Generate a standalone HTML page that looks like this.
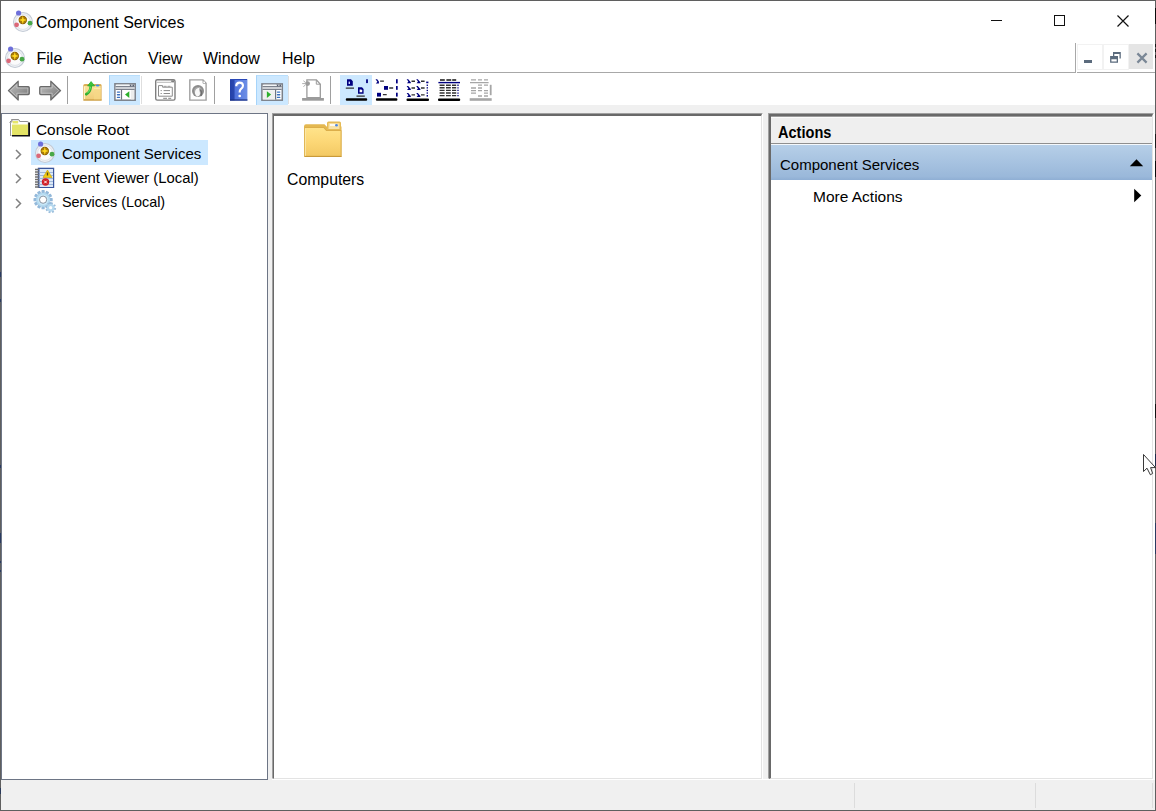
<!DOCTYPE html>
<html><head><meta charset="utf-8">
<style>
html,body{margin:0;padding:0;width:1156px;height:811px;overflow:hidden;background:#fff;}
body{position:relative;font-family:"Liberation Sans",sans-serif;color:#000;}
.a{position:absolute;}
.t{position:absolute;white-space:nowrap;line-height:1;}
</style></head><body>

<svg width="0" height="0" style="position:absolute">
<defs>
<radialGradient id="ringG" cx="0.45" cy="0.4" r="0.6"><stop offset="0" stop-color="#ffffff"/><stop offset="0.7" stop-color="#eef0f3"/><stop offset="1" stop-color="#c9ced6"/></radialGradient>
<radialGradient id="goldG" cx="0.5" cy="0.5" r="0.5"><stop offset="0" stop-color="#ffd800"/><stop offset="0.8" stop-color="#d9a400"/><stop offset="1" stop-color="#8a6000"/></radialGradient>
<symbol id="cs" viewBox="0 0 24 24">
<circle cx="12" cy="13" r="9.5" fill="#eef0f4" stroke="#c3cad5" stroke-width="1.1"/>
<circle cx="12" cy="13" r="7.4" fill="#fbfbfc" stroke="#dde1e7" stroke-width="0.9"/>
<circle cx="11.8" cy="11" r="4.2" fill="#845a00"/>
<circle cx="11.8" cy="11" r="3.5" fill="#a87a08"/>
<path d="M11.8 6.8L12.7 10.1L16 11L12.7 11.9L11.8 15.2L10.9 11.9L7.6 11L10.9 10.1Z" fill="#ffd820"/>
<circle cx="7.6" cy="4" r="2.6" fill="#6d6fda"/>
<circle cx="5.6" cy="15.8" r="2.4" fill="#dc6878"/>
<circle cx="19" cy="14.2" r="2.4" fill="#48a848"/>
</symbol>
</defs></svg>
<!-- window border -->
<div class="a" style="left:0;top:0;width:1156px;height:1px;background:#5f5f5f"></div>
<div class="a" style="left:0;top:0;width:1px;height:811px;background:#5f5f5f"></div>
<div class="a" style="left:1155px;top:0;width:1px;height:811px;background:#5f5f5f"></div>
<div class="a" style="left:0;top:810px;width:1156px;height:1px;background:#5f5f5f"></div>


<div class="a" style="left:1155px;top:8px;width:1px;height:16px;background:#0a0a0a"></div>
<div class="a" style="left:1155px;top:44px;width:1px;height:3px;background:#151515"></div>
<div class="a" style="left:1155px;top:49px;width:1px;height:3px;background:#151515"></div>
<div class="a" style="left:1155px;top:55px;width:1px;height:3px;background:#151515"></div>
<div class="a" style="left:1155px;top:134px;width:1px;height:14px;background:#1a1a1a"></div>
<div class="a" style="left:1155px;top:161px;width:1px;height:16px;background:#0a0a0a"></div>
<div class="a" style="left:1155px;top:454px;width:1px;height:12px;background:#1c2a4a"></div>
<div class="a" style="left:0;top:788px;width:1px;height:6px;background:#2a3a5a"></div>
<div class="a" style="left:0;top:272px;width:1px;height:5px;background:#2a3a60"></div>
<div class="a" style="left:0;top:299px;width:1px;height:3px;background:#2a3a60"></div>
<div class="a" style="left:0;top:465px;width:1px;height:3px;background:#2a3a60"></div>
<div class="a" style="left:0;top:533px;width:1px;height:10px;background:#2a3a60"></div>
<div class="a" style="left:0;top:561px;width:1px;height:2px;background:#2a3a60"></div>
<div class="a" style="left:0;top:570px;width:1px;height:2px;background:#2a3a60"></div>
<div class="a" style="left:1155px;top:404px;width:1px;height:14px;background:#111"></div>
<div class="a" style="left:1155px;top:523px;width:1px;height:31px;background:#2a3a60"></div>
<!-- title bar -->
<svg class="a" style="left:11px;top:9px" width="24" height="24"><use href="#cs"/></svg>
<div class="t" style="left:36px;top:15px;font-size:16px">Component Services</div>
<!-- title controls -->
<div class="a" style="left:991px;top:20px;width:11px;height:1px;background:#111"></div>
<div class="a" style="left:1054px;top:15px;width:9px;height:9px;border:1px solid #111"></div>
<svg class="a" style="left:1116px;top:14px" width="14" height="14" viewBox="0 0 14 14"><path d="M1.5 1.5L12.5 12.5M12.5 1.5L1.5 12.5" stroke="#111" stroke-width="1.2"/></svg>

<!-- menu bar -->
<svg class="a" style="left:3px;top:45px" width="24" height="24"><use href="#cs"/></svg>
<div class="t" style="left:36.5px;top:51px;font-size:16px">File</div>
<div class="t" style="left:83px;top:51px;font-size:16px">Action</div>
<div class="t" style="left:148px;top:51px;font-size:16px">View</div>
<div class="t" style="left:203px;top:51px;font-size:16px">Window</div>
<div class="t" style="left:282px;top:51px;font-size:16px">Help</div>
<div class="a" style="left:1px;top:72px;width:1075px;height:1px;background:#a8a8a8"></div>
<div class="a" style="left:1075px;top:43px;width:1px;height:30px;background:#a8a8a8"></div>
<div class="a" style="left:1077px;top:72px;width:78px;height:1px;background:#a8a8a8"></div>


<!-- MDI buttons -->
<div class="a" style="left:1077px;top:44px;width:24px;height:24px;border:1px solid #f2f2f2;background:#fff"></div>
<div class="a" style="left:1103px;top:44px;width:24px;height:24px;border:1px solid #f2f2f2;background:#fff"></div>
<div class="a" style="left:1129px;top:44px;width:24px;height:25px;background:#e5e5e5"></div>
<div class="a" style="left:1084px;top:60px;width:8px;height:3px;background:#5b6b7d"></div>
<svg class="a" style="left:1109px;top:51px" width="13" height="13" viewBox="1109 51 13 13">
<path d="M1113 52H1120.8V58.6H1119.5V54H1114.3V56H1113Z" fill="#5b6b7d"/>
<path d="M1110.1 56H1118V62.8H1110.1ZM1111.4 59.2V61.5H1116.7V59.2Z" fill="#5b6b7d" fill-rule="evenodd"/>
</svg>
<svg class="a" style="left:1136px;top:52px" width="12" height="12" viewBox="0 0 12 12"><path d="M1.4 1.4L10.6 10.6M10.6 1.4L1.4 10.6" stroke="#7a8796" stroke-width="2.2"/></svg>

<!-- toolbar -->
<div class="a" style="left:1px;top:105px;width:1154px;height:8px;background:#f0f0f0"></div>
<div class="a" style="left:67px;top:76px;width:1px;height:28px;background:#a0a0a0"></div>
<div class="a" style="left:214px;top:76px;width:1px;height:28px;background:#a0a0a0"></div>
<div class="a" style="left:330px;top:76px;width:1px;height:28px;background:#a0a0a0"></div>
<div class="a" style="left:109px;top:75px;width:31px;height:30px;background:#cce8ff;box-sizing:border-box;border-left:1px solid #a6d4fa;border-top:1px solid #b8defc"></div><div class="a" style="left:141px;top:76px;width:1px;height:28px;background:#dedede"></div>
<div class="a" style="left:256px;top:75px;width:32px;height:30px;background:#cce8ff;box-sizing:border-box;border-left:1px solid #a6d4fa;border-top:1px solid #b8defc"></div><div class="a" style="left:288px;top:76px;width:1px;height:28px;background:#dedede"></div>
<div class="a" style="left:340px;top:75px;width:32px;height:30px;background:#cce8ff"></div>


<!-- toolbar icons (absolute coords) -->
<svg class="a" style="left:0;top:0" width="500" height="110" viewBox="0 0 500 110">
<defs>
<linearGradient id="arG" x1="0" y1="0" x2="1" y2="1"><stop offset="0" stop-color="#c4c4c4"/><stop offset="1" stop-color="#727272"/></linearGradient>
<linearGradient id="tfG" x1="0" y1="0" x2="0" y2="1"><stop offset="0" stop-color="#fbe29a"/><stop offset="1" stop-color="#f0cc78"/></linearGradient>
<linearGradient id="hpG" x1="0" y1="0" x2="1" y2="0"><stop offset="0" stop-color="#2340a8"/><stop offset="0.25" stop-color="#2a48b0"/><stop offset="0.27" stop-color="#4f72dc"/><stop offset="1" stop-color="#6d8fe6"/></linearGradient>
</defs>
<!-- back arrow -->
<path d="M8.4 90.6L18.2 81.2V86.6H28.2Q29.3 86.6 29.3 87.7V93.6Q29.3 94.6 28.2 94.6H18.2V100.1Z" fill="url(#arG)" stroke="#6a6a6a" stroke-width="1.2" stroke-linejoin="round"/>
<path d="M10.4 90.6L16.8 84.6V88H27.8V93.2H16.8V96.7Z" fill="none" stroke="#d6d6d6" stroke-width="0.7" opacity="0.8"/>
<!-- forward arrow -->
<path d="M60.6 90.6L50.8 81.2V86.6H40.8Q39.7 86.6 39.7 87.7V93.6Q39.7 94.6 40.8 94.6H50.8V100.1Z" fill="url(#arG)" stroke="#6a6a6a" stroke-width="1.2" stroke-linejoin="round"/>
<path d="M58.6 90.6L52.2 84.6V88H41.2V93.2H52.2V96.7Z" fill="none" stroke="#d6d6d6" stroke-width="0.7" opacity="0.8"/>
<!-- up folder -->
<path d="M83.3 85.5Q83.3 84 84.8 84H100.3Q101.6 84 101.6 85.5V100.4H83.3Z" fill="#dcae55"/>
<path d="M84.2 86H100.7V99.6H84.2Z" fill="url(#tfG)"/>
<path d="M84.2 99.6H101.6V100.6H83.3Z" fill="#c89a40"/>
<path d="M94 88.6H100.6V99.4H94Z" fill="#f6d888" opacity="0.7"/>
<path d="M94 88.6H100.6" stroke="#fff0b8" stroke-width="0.8"/>
<path d="M84.6 86.4V99" stroke="#fff6cc" stroke-width="1"/>
<ellipse cx="97.6" cy="85.6" rx="1.9" ry="1" fill="#3d8ef0"/>
<path d="M86.2 94.3Q90.2 92.5 90.8 86.4" fill="none" stroke="#2fae2f" stroke-width="2.6" stroke-linecap="round"/>
<path d="M87.6 85.9L91.1 81.6L94.6 85.9Z" fill="#3cc23c" stroke="#2fae2f" stroke-width="0.8" stroke-linejoin="round"/>
<path d="M87.4 93.2Q90 91.6 90.6 86.6" fill="none" stroke="#74f274" stroke-width="0.9"/>
<!-- show/hide tree window icon -->
<rect x="114.9" y="83.8" width="20.3" height="16.4" fill="#fff" stroke="#7b8089" stroke-width="1.5"/>
<path d="M115.6 86.6H134.6M115.6 89.4H134.6" stroke="#6e7480" stroke-width="1"/>
<path d="M116.6 85.3H129" stroke="#f2f4f6" stroke-width="1.2"/><rect x="129.8" y="84.6" width="1.6" height="1.6" fill="#596070"/><rect x="132.4" y="84.6" width="1.6" height="1.6" fill="#596070"/>
<rect x="115.6" y="87.1" width="19" height="1.8" fill="#c9ccd2"/>
<path d="M121.5 89.6V99.6" stroke="#6e7480" stroke-width="1.2"/>
<rect x="116.8" y="91.4" width="3.4" height="1.3" rx="0.6" fill="#3a70c0"/>
<rect x="116.8" y="94.1" width="3.4" height="1.3" rx="0.6" fill="#3a70c0"/>
<rect x="116.8" y="96.8" width="3.4" height="1.3" rx="0.6" fill="#3a70c0"/>
<rect x="130.8" y="90.2" width="3.2" height="9.2" fill="#ececec"/>
<path d="M129.3 91.2V98L125 94.6Z" fill="#2cb02c"/>
<!-- properties (disabled) -->
<rect x="155.7" y="79.7" width="19.3" height="20.4" rx="1.6" fill="#fff" stroke="#7f7f7f" stroke-width="1.4"/>
<path d="M156.6 82.3H171" stroke="#b8b8b8" stroke-width="1"/>
<rect x="171.2" y="80.4" width="2.8" height="2" fill="#7f7f7f"/>
<path d="M158.5 85.6H162.6V87.2H172.3V96.2H158.5Z" fill="#fff" stroke="#8c8c8c" stroke-width="1"/>
<path d="M163.6 86.3H166.6M167.6 86.3H170.4" stroke="#9a9a9a" stroke-width="1"/>
<path d="M160.6 90.6H161.8M163.6 90.6H170M160.6 93.5H161.8M163.6 93.5H170" stroke="#8a8a8a" stroke-width="1"/>
<path d="M163.2 98.4H167M168.2 98.4H171.2" stroke="#9a9a9a" stroke-width="1.2"/>
<!-- refresh (disabled) -->
<path d="M189.8 79.9H203L206.1 83.2V100.1H189.8Z" fill="#fff" stroke="#a0a0a0" stroke-width="1.4"/>
<path d="M203 80V83.3H206" fill="none" stroke="#a8a8a8" stroke-width="1"/>
<rect x="203.6" y="81.6" width="1.4" height="1.4" fill="#fff"/>
<circle cx="198" cy="91" r="6" fill="#8c8c8c"/>
<circle cx="198" cy="91" r="4" fill="#a8a8a8"/>
<path d="M195 93.5Q194.6 89.6 197.6 88.2L199.8 87.4Q198.6 89 199.4 90.6Q200.2 92.6 199.8 95Q198.8 96.8 197 96.4Q195.4 95.6 195 93.5Z" fill="#f8f8f8"/>
<path d="M200.4 89.6Q202.4 92.4 200.8 96" fill="none" stroke="#6e6e6e" stroke-width="1.3"/>
<!-- help -->
<rect x="230" y="79.1" width="17.4" height="21.5" fill="url(#hpG)"/>
<path d="M230 100H247.4" stroke="#1a2f80" stroke-width="1.2"/>
<path d="M230.4 79.5H247" stroke="#2a48b8" stroke-width="1"/>
<path d="M236.2 86.2Q236.2 82.6 239.6 82.6Q243 82.6 243 85.8Q243 87.6 240.8 89.2Q239.6 90.1 239.6 92.4" fill="none" stroke="#fff" stroke-width="2.1"/>
<circle cx="239.7" cy="96" r="1.35" fill="#fff"/>
<path d="M237.5 86.6Q237.5 84.4 239.6 84.2" fill="none" stroke="#9aa8d0" stroke-width="0.6"/>
<!-- show/hide action pane window icon -->
<rect x="261.9" y="83.9" width="20.4" height="16.3" fill="#fff" stroke="#7b8089" stroke-width="1.5"/>
<path d="M262.6 86.6H281.6M262.6 89.4H281.6" stroke="#6e7480" stroke-width="1"/>
<path d="M263.6 85.3H276" stroke="#f2f4f6" stroke-width="1.2"/><rect x="276.8" y="84.6" width="1.6" height="1.6" fill="#596070"/><rect x="279.4" y="84.6" width="1.6" height="1.6" fill="#596070"/>
<rect x="262.6" y="87.1" width="19" height="1.8" fill="#c9ccd2"/>
<path d="M275.6 89.6V99.6" stroke="#6e7480" stroke-width="1.2"/>
<rect x="263" y="90.2" width="12" height="9.2" fill="#f0f0f0"/>
<rect x="276.8" y="91.4" width="3.6" height="1.3" rx="0.6" fill="#3a70c0"/>
<rect x="276.8" y="94.1" width="3.6" height="1.3" rx="0.6" fill="#3a70c0"/>
<rect x="276.8" y="96.8" width="3.6" height="1.3" rx="0.6" fill="#3a70c0"/>
<path d="M266.9 91.2V98L271.1 94.6Z" fill="#2cb02c"/>
<!-- new window (disabled) -->
<path d="M306.9 84V97.6H320.3V84.2L316.4 79.8H306.9V83" fill="#fff" stroke="#9b9b9b" stroke-width="1.3"/>
<path d="M316.3 80V84.2H320.3" fill="none" stroke="#9b9b9b" stroke-width="1"/>
<circle cx="307.6" cy="83.6" r="2.4" fill="#9b9b9b"/>
<path d="M302.2 83.6H305.2M303.4 80.8L305.4 82.4M303.4 86.6L305.4 85" stroke="#a6a6a6" stroke-width="0.9"/>
<rect x="302.1" y="98" width="21.8" height="2.7" fill="#9b9b9b"/>
<!-- large icons view -->
<g fill="#000080">
<path d="M347 79.3H351L352.8 81.2V85.8H347Z"/>
<path d="M358 87.3H362L363.6 89.1V93.8H358Z"/>
<rect x="366.1" y="79.3" width="1.8" height="3.8"/>
</g>
<rect x="348.6" y="81.6" width="1.4" height="2.4" fill="#c8d0ff"/>
<path d="M359.6 89.4L361.4 89.4L362.2 90.4V92.2H359.6Z" fill="#ffffff"/>
<path d="M345.8 88.1H354M356.5 96.2H364.8" stroke="#303030" stroke-width="1.3"/>
<rect x="345.8" y="98.3" width="21.4" height="2.5" rx="1" fill="#000"/>
<!-- small icons view -->
<g fill="#000080">
<path d="M375.5 79.2H377.2L378.9 81.4V83.4H375.8L377.4 81.8Z"/>
<rect x="384" y="86" width="4" height="3.8"/>
<rect x="377" y="92.8" width="4" height="3.8"/>
<rect x="396" y="79.2" width="1.7" height="4.2"/>
<rect x="396" y="86" width="1.7" height="3.8"/>
<rect x="396" y="92.7" width="1.7" height="3.9"/>
</g>
<path d="M380.1 81.2H383.9M389.2 88H393.2M382.9 94.7H386.7" stroke="#303030" stroke-width="1.3"/>
<rect x="375.9" y="98.3" width="21.5" height="2.5" rx="1" fill="#000"/>
<!-- list view -->
<g fill="#000080">
<path d="M406.6 79.3H408.2L410.8 82.2V83.2H407L408.4 81.6Z"/>
<path d="M416.2 79.3H417.8L420.4 82.2V83.2H416.6L418 81.6Z"/>
<path d="M406.6 86.1H408.2L410.8 89V90H407L408.4 88.4Z"/>
<path d="M416.2 86.1H417.8L420.4 89V90H416.6L418 88.4Z"/>
<path d="M406.6 93H408.2L410.8 95.9V96.9H407L408.4 95.3Z"/>
<path d="M416.2 93H417.8L420.4 95.9V96.9H416.6L418 95.3Z"/>
<rect x="426.2" y="81.6" width="2.2" height="1.6"/>
<rect x="426.6" y="84.6" width="1.4" height="1.3"/>
<rect x="426.6" y="87.2" width="1.4" height="1.3"/>
<rect x="426.6" y="89.8" width="1.4" height="1.3"/>
<rect x="426.6" y="92.4" width="1.4" height="1.3"/>
<rect x="426.6" y="95" width="1.4" height="1.6"/>
</g>
<path d="M411.5 81.3H415M421 81.3H424.6M411.5 88H415M421 88H424.6M411.5 94.9H415M421 94.9H424.6" stroke="#303030" stroke-width="1.4"/>
<rect x="406.5" y="98.4" width="22.5" height="2.6" rx="1" fill="#000"/>
<!-- detail view -->
<path d="M440 80H444.8M446.4 80H451.2M452.2 80H456.2" stroke="#111" stroke-width="1.5"/>
<path d="M438.4 82.6H460" stroke="#000080" stroke-width="1.4"/>
<path d="M439.6 85.2H444.6M446 85.2H450.8M452 85.2H456.2M439.6 87.8H444.6M446 87.8H450.8M452 87.8H456.2M439.6 90.4H444.6M446 90.4H450.8M452 90.4H456.2M439.6 93H444.6M446 93H450.8M452 93H456.2M439.6 95.6H444.6M446 95.6H450.8M452 95.6H456.2" stroke="#333" stroke-width="1.4"/>
<path d="M458 84.6V96.4" stroke="#000080" stroke-width="1.3" stroke-dasharray="1.3 1.3"/>
<rect x="438" y="98.4" width="22.2" height="2.6" rx="1" fill="#000"/>
<!-- customize view (disabled) -->
<g stroke="#a6a6a6" stroke-width="1.3">
<path d="M471 79.8H476M478 79.8H482M484 79.8H488M470 82.6H488.6"/>
<path d="M478 85.2H482M484 85.2H488M471 88H476M478 88H482M471 90.6H476M478 90.6H482M484 90.6H488M471 93.2H476M484 93.2H488M478 96H482M484 96H488"/>
</g>
<rect x="489.8" y="84.8" width="1.8" height="10.4" fill="#a6a6a6"/>
<rect x="469.7" y="98.2" width="22" height="2.6" fill="#a6a6a6"/>
</svg>

<!-- left pane -->
<div class="a" style="left:1px;top:113px;width:265px;height:665px;border:1px solid #6d7585;background:#fff"></div>
<div class="a" style="left:268px;top:113px;width:4px;height:667px;background:#f0f0f0"></div>
<!-- middle pane -->
<div class="a" style="left:272px;top:113px;width:489px;height:664px;border-left:1px solid #a0a0a0;border-top:1px solid #a0a0a0;border-right:1px solid #fff;border-bottom:1px solid #fff;background:#fff"></div>
<div class="a" style="left:273px;top:114px;width:487px;height:662px;border-left:1px solid #696969;border-top:2px solid #696969;border-right:1px solid #e3e3e3;border-bottom:1px solid #e3e3e3;background:#fff"></div>
<div class="a" style="left:763px;top:113px;width:5px;height:666px;background:#f0f0f0"></div>
<!-- right pane -->
<div class="a" style="left:768px;top:113px;width:384px;height:664px;border-left:1px solid #a0a0a0;border-top:1px solid #a0a0a0;border-right:1px solid #fff;border-bottom:1px solid #fff;background:#fff"></div>
<div class="a" style="left:769px;top:114px;width:381px;height:662px;border-left:2px solid #696969;border-top:2px solid #696969;border-right:1px solid #e3e3e3;border-bottom:1px solid #e3e3e3;background:#fff"></div>

<!-- tree -->
<div class="a" style="left:31px;top:140px;width:177px;height:25px;background:#cce8ff"></div>
<svg class="a" style="left:33px;top:140px" width="24" height="24"><use href="#cs"/></svg>

<!-- console root folder -->
<svg class="a" style="left:9px;top:118px" width="22" height="19" viewBox="0 0 22 19">
<path d="M0.5 4.5L2.5 2.5V1.5H9.5L11 3.5H18.5V5.5H19.5" fill="none" stroke="#8a8a8a" stroke-width="1"/>
<path d="M1 18V4.5L2.8 2.8H3V1.5H10L11.2 3.5H19.5V18Z" fill="#9a9a9a"/>
<path d="M2 17.5V5L3 4H3.5V2.2H9.6L10.6 4H18.8V17.5Z" fill="#ffffff"/>
<path d="M3 17V6.5H19V17Z" fill="#e4e466"/>
<path d="M3.5 3H9.2V5.5H3.5Z" fill="#e6e66a"/>
<path d="M19.2 4.5H21V18.5H3V17H19.2Z" fill="#111"/>
</svg>
<!-- chevrons -->
<svg class="a" style="left:14px;top:149px" width="10" height="11" viewBox="0 0 10 11"><path d="M2 1L6.5 5.5L2 10" fill="none" stroke="#808080" stroke-width="1.5"/></svg>
<svg class="a" style="left:14px;top:173px" width="10" height="11" viewBox="0 0 10 11"><path d="M2 1L6.5 5.5L2 10" fill="none" stroke="#808080" stroke-width="1.5"/></svg>
<svg class="a" style="left:14px;top:198px" width="10" height="11" viewBox="0 0 10 11"><path d="M2 1L6.5 5.5L2 10" fill="none" stroke="#808080" stroke-width="1.5"/></svg>
<!-- event viewer -->
<svg class="a" style="left:34px;top:167px" width="22" height="22" viewBox="0 0 22 22">
<rect x="3.8" y="0.7" width="16.4" height="20.3" fill="#3a569e"/>
<rect x="5.5" y="2" width="13.5" height="18" fill="#dce8f6"/>
<path d="M5.5 5.5H19M5.5 8.5H19M5.5 11.5H19M5.5 14.5H19M5.5 17.5H19" stroke="#9fb8da" stroke-width="1"/>
<path d="M1 2.5H5M1 5H5M1 7.5H5M1 10H5M1 12.5H5M1 15H5M1 17.5H5M1 20H5" stroke="#6f6f6f" stroke-width="1.3"/>
<path d="M13.5 3L18 10.5H9Z" fill="#f2cc10" stroke="#c9a000" stroke-width="0.6"/>
<path d="M13.5 5.5V8.5" stroke="#5a4a10" stroke-width="1.4"/>
<circle cx="11.5" cy="15" r="3.7" fill="#d01f28"/>
<path d="M10.2 13.7L12.8 16.3M12.8 13.7L10.2 16.3" stroke="#fff" stroke-width="1"/>
</svg>
<!-- services gears -->
<svg class="a" style="left:32px;top:189px" width="26" height="26" viewBox="0 0 26 26">
<g transform="translate(11.1 10.7)">
<g fill="#94b9da">
<rect x="-1.6" y="-9.6" width="3.2" height="19.2" rx="0.6"/>
<rect x="-1.6" y="-9.6" width="3.2" height="19.2" rx="0.6" transform="rotate(30)"/>
<rect x="-1.6" y="-9.6" width="3.2" height="19.2" rx="0.6" transform="rotate(60)"/>
<rect x="-1.6" y="-9.6" width="3.2" height="19.2" rx="0.6" transform="rotate(90)"/>
<rect x="-1.6" y="-9.6" width="3.2" height="19.2" rx="0.6" transform="rotate(120)"/>
<rect x="-1.6" y="-9.6" width="3.2" height="19.2" rx="0.6" transform="rotate(150)"/>
</g>
<circle r="7" fill="#b4daf0"/>
<circle r="5.2" fill="#cae8f8"/>
<circle r="3.6" fill="#fff" stroke="#7d8a98" stroke-width="0.9"/>
</g>
<g transform="translate(18.7 18.7)">
<g fill="#9cbedc">
<rect x="-1" y="-5.4" width="2" height="10.8" transform="rotate(15)"/>
<rect x="-1" y="-5.4" width="2" height="10.8" transform="rotate(60)"/>
<rect x="-1" y="-5.4" width="2" height="10.8" transform="rotate(105)"/>
<rect x="-1" y="-5.4" width="2" height="10.8" transform="rotate(150)"/>
</g>
<circle r="3.8" fill="#b6d9ef"/>
<circle r="1.6" fill="#fff"/>
</g>
</svg>
<div class="t" style="left:36px;top:121.5px;font-size:15.4px">Console Root</div>
<div class="t" style="left:62px;top:145.5px;font-size:15px">Component Services</div>
<div class="t" style="left:62px;top:170.5px;font-size:14.85px">Event Viewer (Local)</div>
<div class="t" style="left:62px;top:195px;font-size:14.4px">Services (Local)</div>

<!-- middle -->

<!-- computers folder -->
<svg class="a" style="left:303px;top:121px" width="40" height="37" viewBox="0 0 40 37">
<defs><linearGradient id="fG" x1="0" y1="0" x2="0" y2="1"><stop offset="0" stop-color="#ffe38a"/><stop offset="0.5" stop-color="#fcd776"/><stop offset="1" stop-color="#f3c964"/></linearGradient></defs>
<path d="M1 5.5Q1 3.2 3 3.2H21.5L23.5 5.5H38.5V35.5H1Z" fill="#e4b850"/>
<path d="M24 2Q24 0.5 25.5 0.5H36.5Q38 0.5 38 2V9H24Z" fill="#e6bb55"/>
<path d="M25.5 2.2H36.5V8H25.5Z" fill="#f8e3a8"/>
<path d="M27 3.2H32V4.8H27Z" fill="#ffffff"/>
<circle cx="33.5" cy="4.2" r="1.3" fill="#4a86e8"/>
<path d="M1.5 6.2H21L23.6 9.2H38.5V35.8H1.5Z" fill="#d9ab48"/>
<path d="M2.4 7H20.6L23.2 10H37.6V34.8H2.4Z" fill="url(#fG)"/>
<path d="M2.4 7.2V34.8" stroke="#fff2c0" stroke-width="0.8"/>
<path d="M1.5 35.5H38.5" stroke="#c99a3a" stroke-width="1.2"/>
</svg>
<div class="t" style="left:287px;top:171.5px;font-size:15.8px">Computers</div>

<!-- actions -->
<div class="a" style="left:771px;top:116px;width:381px;height:27px;background:#efefef;box-sizing:border-box;border-top:1px solid #9c9c9c"></div><div class="a" style="left:771px;top:117px;width:381px;height:1px;background:#fbfbfb"></div>
<div class="a" style="left:771px;top:143px;width:381px;height:1px;background:#8f8f8f"></div><div class="a" style="left:771px;top:144px;width:381px;height:1px;background:#f4f8fc"></div>
<div class="a" style="left:771px;top:145px;width:381px;height:35px;background:linear-gradient(#b6cfe8,#9ab8da 90%,#8fafd4)"></div>
<div class="t" style="left:777.5px;top:124.5px;font-size:16px;font-weight:bold;transform:scaleX(0.91);transform-origin:0 0">Actions</div>
<div class="t" style="left:780px;top:156.5px;font-size:15px">Component Services</div>

<svg class="a" style="left:1129px;top:158px" width="15" height="9" viewBox="0 0 15 9"><path d="M0.8 8.3L7.5 1.2L14.2 8.3Z" fill="#000"/></svg>
<svg class="a" style="left:1133px;top:188px" width="9" height="15" viewBox="0 0 9 15"><path d="M1.2 0.8L8.3 7.5L1.2 14.2Z" fill="#000"/></svg>
<div class="t" style="left:813px;top:189px;font-size:15.5px">More Actions</div>

<!-- status bar -->
<div class="a" style="left:1px;top:780px;width:1154px;height:30px;background:#f0f0f0"></div>
<div class="a" style="left:854px;top:783px;width:1px;height:25px;background:#dcdcdc"></div>
<div class="a" style="left:1035px;top:783px;width:1px;height:25px;background:#dcdcdc"></div>
<div class="a" style="left:1152px;top:783px;width:1px;height:25px;background:#dcdcdc"></div>

<!-- right edge bits & cursor -->
<svg class="a" style="left:1136px;top:445px" width="20" height="35" viewBox="1136 445 20 35">
<path d="M1143.5 454.5V471.5L1147 468.2L1150.4 474.8L1152.6 473.4L1150.6 467.6H1155.5L1143.5 454.5Z" fill="#fff" stroke="#222" stroke-width="0.9" stroke-linejoin="miter"/>
</svg>
</body></html>
